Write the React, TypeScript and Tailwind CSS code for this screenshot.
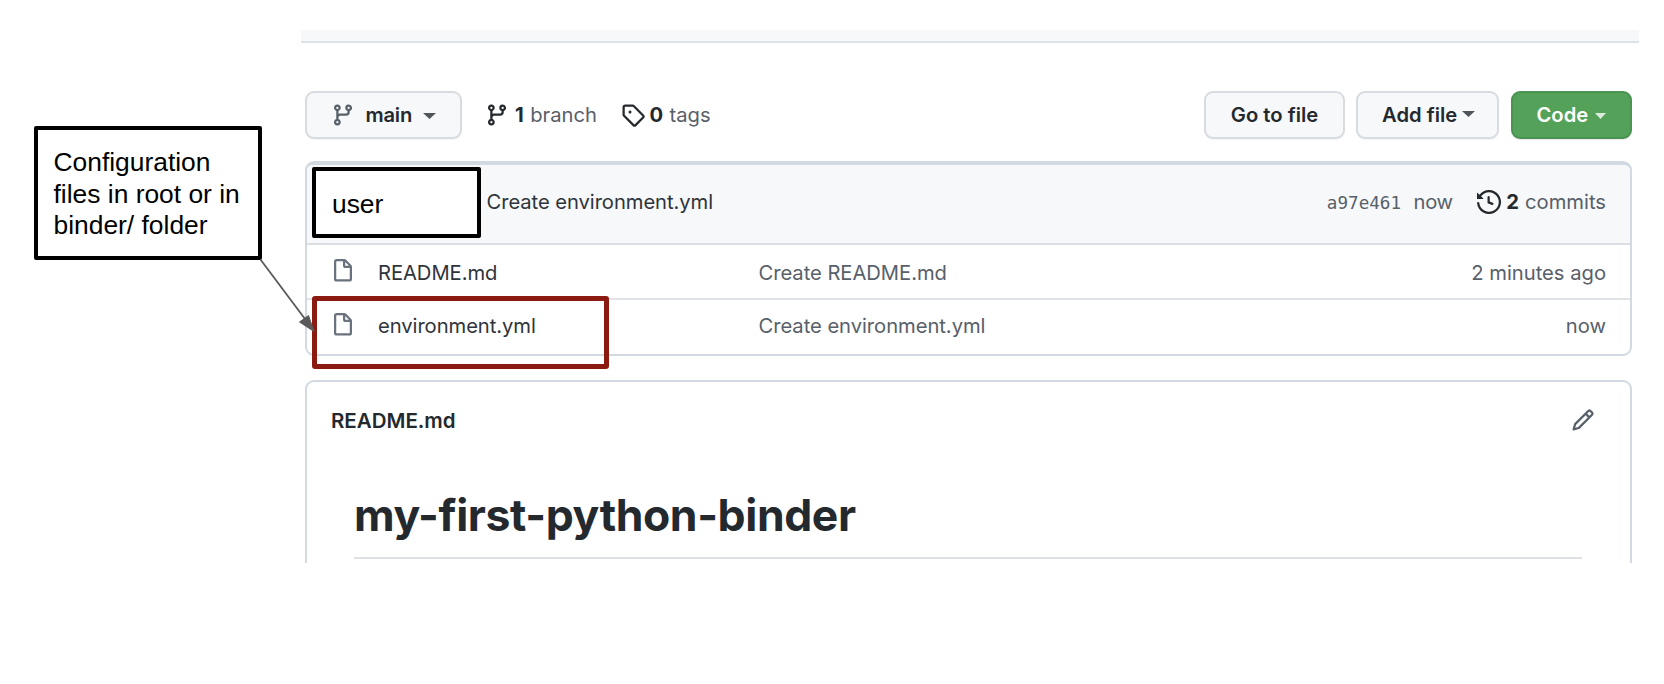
import React from "react";

const paths = {
  branch:
    "M11.75 2.5a.75.75 0 100 1.5.75.75 0 000-1.5zm-2.25.75a2.25 2.25 0 113 2.122V6A2.5 2.5 0 0110 8.5H6a1 1 0 00-1 1v1.128a2.251 2.251 0 11-1.5 0V5.372a2.25 2.25 0 111.5 0v1.836A2.492 2.492 0 016 7h4a1 1 0 001-1v-.628A2.25 2.25 0 019.5 3.25zM4.25 12a.75.75 0 100 1.5.75.75 0 000-1.5zM3.5 3.25a.75.75 0 111.5 0 .75.75 0 01-1.5 0z",
  tag: "M2.5 7.775V2.75a.25.25 0 01.25-.25h5.025a.25.25 0 01.177.073l6.25 6.25a.25.25 0 010 .354l-5.025 5.025a.25.25 0 01-.354 0l-6.25-6.25a.25.25 0 01-.073-.177zm-1.5 0V2.75C1 1.784 1.784 1 2.75 1h5.025c.464 0 .91.184 1.238.513l6.25 6.25a1.75 1.75 0 010 2.474l-5.026 5.026a1.75 1.75 0 01-2.474 0l-6.25-6.25A1.75 1.75 0 011 7.775zM6 5a1 1 0 100 2 1 1 0 000-2z",
  history:
    "M1.643 3.143L.427 1.927A.25.25 0 000 2.104V5.75c0 .138.112.25.25.25h3.646a.25.25 0 00.177-.427L2.715 4.215a6.5 6.5 0 11-1.18 4.458.75.75 0 10-1.493.154 8.001 8.001 0 101.6-5.684zM7.75 4a.75.75 0 01.75.75v2.992l2.028.812a.75.75 0 01-.557 1.392l-2.5-1A.75.75 0 017 8.25v-3.5A.75.75 0 017.75 4z",
  file: "M3.75 1.5a.25.25 0 00-.25.25v11.5c0 .138.112.25.25.25h8.5a.25.25 0 00.25-.25V6H9.75A1.75 1.75 0 018 4.25V1.5H3.75zm5.75.56v2.19c0 .138.112.25.25.25h2.19L9.5 2.06zM2 1.75C2 .784 2.784 0 3.75 0h5.086c.464 0 .909.184 1.237.513l3.414 3.414c.329.328.513.773.513 1.237v8.086A1.75 1.75 0 0112.25 15h-8.5A1.75 1.75 0 012 13.25V1.75z",
  pencil:
    "M11.013 1.427a1.75 1.75 0 012.474 0l1.086 1.086a1.75 1.75 0 010 2.474l-8.61 8.61c-.21.21-.47.364-.756.445l-3.251.93a.75.75 0 01-.927-.928l.929-3.25a1.75 1.75 0 01.445-.758l8.61-8.61zm1.414 1.06a.25.25 0 00-.354 0L10.811 3.75l1.439 1.44 1.263-1.263a.25.25 0 000-.354l-1.086-1.086zM11.189 6.25L9.75 4.81l-6.286 6.287a.25.25 0 00-.064.108l-.558 1.953 1.953-.558a.249.249 0 00.108-.064l6.286-6.286z",
};

function Icon({ name, className = "" }: { name: keyof typeof paths; className?: string }) {
  return (
    <svg viewBox="0 0 16 16" fill="currentColor" className={`h-6 w-6 shrink-0 ${className}`}>
      <path fillRule="evenodd" d={paths[name]} />
    </svg>
  );
}

function Caret({ className = "" }: { className?: string }) {
  return (
    <svg
      viewBox="0 0 12 6"
      preserveAspectRatio="none"
      fill="currentColor"
      className={`h-1.5 shrink-0 ${className}`}
    >
      <path d="M0 0h12L6 6z" />
    </svg>
  );
}

const button =
  "flex h-12 items-center rounded-[9px] border-2 border-[#d8dce0] bg-[#f6f8fa] font-semibold shadow-[0_1px_1px_rgba(27,31,35,0.05)]";

function Toolbar() {
  return (
    <div className="mt-12 flex h-12 items-center pr-[7px] pl-1">
      <button className={`${button} w-[157px] pl-[23.5px]`}>
        <Icon name="branch" className="text-[#586069]" />
        <span className="ml-[11px] tracking-[-0.2px]">main</span>
        <Caret className="mt-0.5 ml-[10.5px] w-[13px] text-[#50555b]" />
      </button>
      <a className="ml-[22.5px] flex items-center text-[#586069]">
        <Icon name="branch" className="text-[#24292e]" />
        <strong className="ml-[6.5px] font-bold text-[#24292e]">1</strong>
        <span className="ml-[6.5px]">branch</span>
      </a>
      <a className="ml-[24px] flex items-center text-[#586069]">
        <Icon name="tag" className="text-[#24292e]" />
        <strong className="ml-[4.5px] font-bold text-[#24292e]">0</strong>
        <span className="ml-[6.5px]">tags</span>
      </a>
      <div className="ml-auto flex">
        <button className={`${button} w-[141px] justify-center`}>Go to file</button>
        <button className={`${button} ml-[11px] w-[143px] pl-6`}>
          Add file
          <Caret className="mb-0.5 ml-[5px] w-[13px] text-[#50555b]" />
        </button>
        <button className="ml-[12px] flex h-12 w-[121px] items-center rounded-[9px] border-2 border-[#4a9350] bg-[#54a15a] pl-[23.5px] font-semibold text-white shadow-[0_1px_1px_rgba(27,31,35,0.1)]">
          Code
          <Caret className="mt-px ml-[6.5px] w-[11px] text-[#dcecdd]" />
        </button>
      </div>
    </div>
  );
}

const files = [
  { name: "README.md", message: "Create README.md", age: "2 minutes ago" },
  { name: "environment.yml", message: "Create environment.yml", age: "now" },
];

function FileTable() {
  return (
    <div className="mt-[22px] mr-[7px] ml-1 h-[195px] overflow-hidden rounded-[9px] border-2 border-t-4 border-[#d3d9e0]">
      <div className="flex h-20 items-center border-b-2 border-[#dbdfe4] bg-[#f6f8fa] pr-6 pb-1 pl-[179.5px] text-[#586069]">
        <a className="tracking-[-0.06px] text-[#2f343a]">Create environment.yml</a>
        <a className="mt-0.5 ml-auto font-['DejaVu_Sans_Mono',monospace] text-[17.6px]">a97e461</a>
        <span className="ml-[12.5px] tracking-[-0.3px]">now</span>
        <Icon name="history" className="ml-[24px] text-[#24292e]" />
        <strong className="ml-[5.5px] font-bold text-[#24292e]">2</strong>
        <span className="ml-[6px]">commits</span>
      </div>
      {files.map((f, i) => (
        <div
          key={f.name}
          className={`flex items-center pr-6 pl-[23.5px] text-[#586069] ${
            i === 0 ? "h-[55px] border-b-2 border-[#dfe3e8] pt-0.5" : "h-[53px] pb-px"
          }`}
        >
          <Icon name="file" className="mb-[3px] text-[#6a737d]" />
          <a className="ml-[23.5px] w-[380.5px] tracking-[-0.06px] text-[#2f343a]">{f.name}</a>
          <a className="tracking-[-0.04px]">{f.message}</a>
          <span className="ml-auto">{f.age}</span>
        </div>
      ))}
    </div>
  );
}

function Readme() {
  return (
    <div className="mt-6 mr-[7px] ml-1 h-[183px] rounded-t-[9px] border-2 border-b-0 border-[#d3d9e0]">
      <div className="flex items-center justify-between pt-[27px] pr-[35px] pl-6">
        <h2 className="text-[20.5px] font-semibold">README.md</h2>
        <Icon name="pencil" className="-mt-0.5 text-[#586069]" />
      </div>
      <h1 className="mt-[52px] mr-12 ml-[47px] h-[74px] border-b-2 border-[#dde1e6] text-[44.5px] leading-[60px] font-bold tracking-[-0.4px]">
        my-first-python-binder
      </h1>
    </div>
  );
}

function Annotations() {
  return (
    <>
      <div className="absolute top-[126px] left-[34px] h-[134px] w-[228px] rounded-[2px] border-4 border-black bg-white pt-[17px] pl-[15.5px] font-['Liberation_Sans',sans-serif] text-[26.4px] leading-[31.5px] text-black">
        Configuration
        <br />
        files in root or in
        <br />
        binder/ folder
      </div>
      <div className="absolute top-[167px] left-[312px] flex h-[71px] w-[169px] items-center rounded-[2px] border-4 border-black bg-white pt-0.5 pl-4 font-['Liberation_Sans',sans-serif] text-[26.4px] text-black">
        user
      </div>
      <div className="absolute top-[296px] left-[312px] h-[73px] w-[297px] rounded-[3px] border-[5px] border-[#8b1a10]" />
      <svg className="absolute top-[250px] left-[250px] h-[90px] w-[70px]" viewBox="250 250 70 90">
        <path d="M260.500 259.500L305 319" stroke="#595959" strokeWidth="1.8" />
        <path d="M314 331.500L299.500 322L308.500 315.500z" fill="#595959" stroke="#595959" />
      </svg>
    </>
  );
}

export default function App() {
  return (
    <div className="relative h-[684px] w-[1664px] overflow-hidden bg-white font-['Inter',sans-serif] text-[20.2px] leading-6 text-[#24292e]">
      <main className="ml-[301px] w-[1338px] pt-[30px]">
        <div className="h-[13px] border-b-2 border-[#dde2e7] bg-[#f6f8fa]" />
        <Toolbar />
        <FileTable />
        <Readme />
      </main>
      <Annotations />
    </div>
  );
}
